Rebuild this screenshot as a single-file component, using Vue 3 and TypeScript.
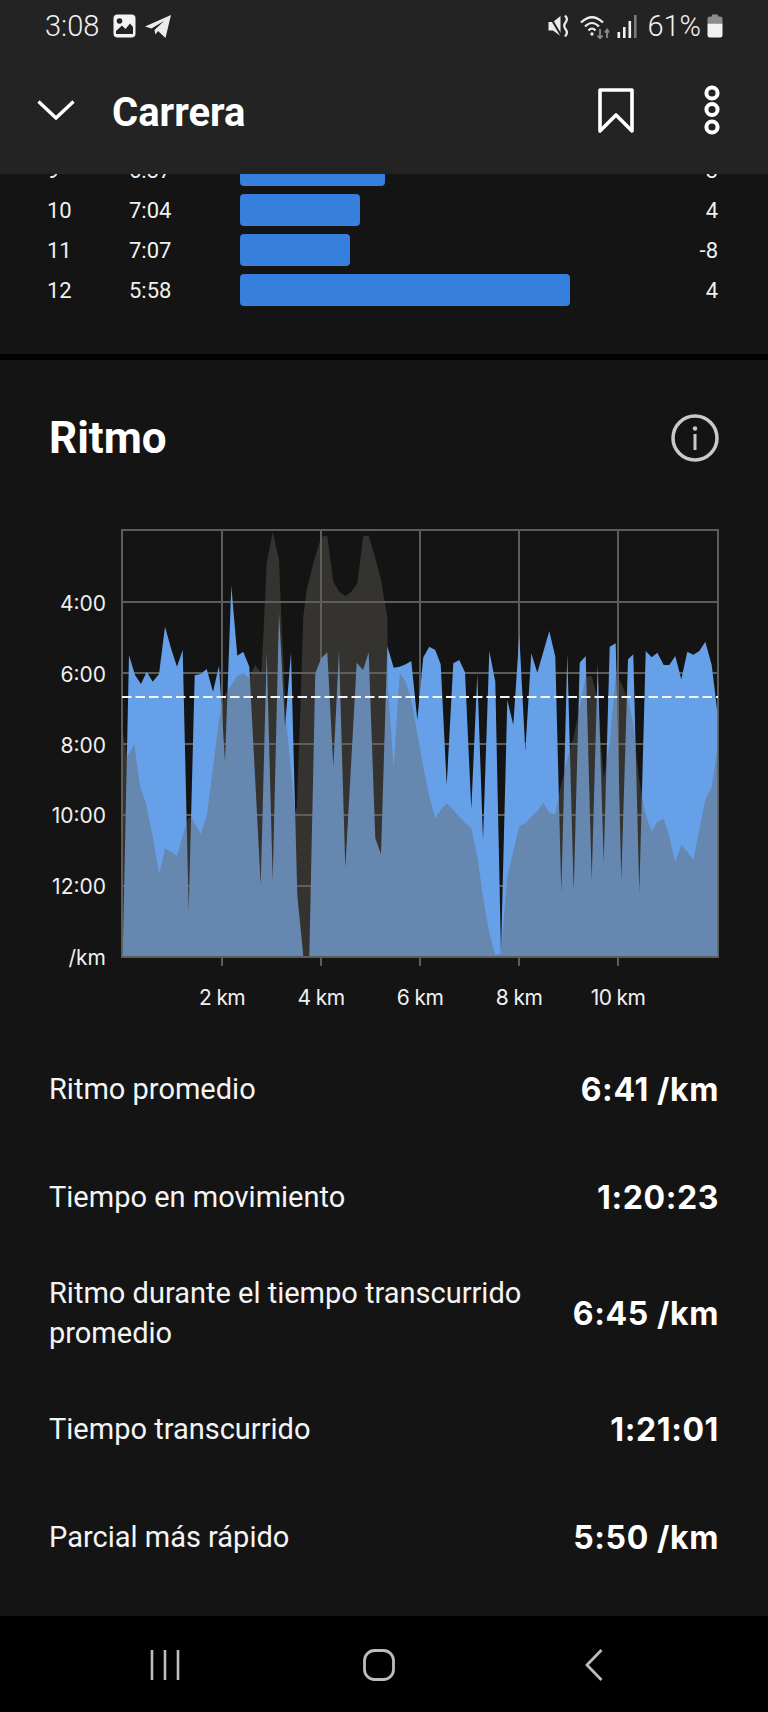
<script setup lang="ts">
type Pt = [number, number];

// traced from the chart, coordinates are 3x crops with their own x offset
const toPage = (pts: Pt[], offX: number) =>
  pts.map(([x, y]) => `${(offX + x / 3).toFixed(1)},${(520 + y / 3).toFixed(1)}`).join(" ");

const paceA: Pt[] = [[68,1308],[87,405],[105,465],[123,492],[140,455],[158,485],[177,462],[195,320],[213,385],[231,440],[248,390],[266,1170],[284,466],[302,462],[320,447],[339,515],[357,437],[375,725],[394,197],[412,407],[430,395],[448,440],[482,1095],[500,395],[518,1080],[537,278],[555,620],[573,397],[592,1125],[610,1308],[628,1308],[646,460],[664,415],[682,397],[700,740],[717,390],[736,1045],[770,428],[789,450],[806,397],[826,955],[843,1003],[862,378],[881,443],[899,440],[917,433],[934,423],[952,600],[970,412],[988,380],[1006,390]];
const paceB: Pt[] = [[62,433],[80,795],[100,430],[118,420],[135,457],[154,868],[172,462],[189,960],[208,393],[226,485],[243,1300],[262,540],[280,615],[298,345],[316,692],[334,400],[352,458],[388,333],[406,410],[424,1118],[442,400],[461,1115],[479,428],[497,408],[515,1080],[533,432],[551,1025],[569,380],[587,370],[604,1080],[624,418],[640,403],[658,1118],[677,393],[695,412],[712,398],[731,435],[748,435],[766,408],[784,478],[802,395],[820,404],[838,393],[856,365],[875,435],[892,575],[892,1308]];
const elevA: Pt[] = [[65,1308],[65,620],[82,710],[103,672],[120,800],[138,850],[158,950],[178,1062],[195,985],[213,995],[231,1007],[250,940],[266,890],[275,895],[302,942],[320,890],[339,745],[357,600],[375,525],[394,495],[412,468],[430,460],[448,475],[466,435],[484,460],[490,350],[500,130],[518,35],[537,120],[543,270],[558,600],[585,875],[590,865],[600,600],[610,290],[620,210],[640,130],[664,50],[682,47],[700,185],[718,215],[736,228],[754,215],[772,190],[790,47],[806,47],[825,110],[843,180],[862,290],[864,500],[881,745],[899,460],[917,485],[934,540],[952,640],[970,740],[988,830],[1006,895]];
const elevB: Pt[] = [[62,870],[80,850],[100,870],[118,890],[135,908],[154,925],[172,1010],[189,1130],[208,1240],[226,1305],[243,1300],[262,1070],[298,918],[316,910],[334,890],[352,873],[370,848],[388,880],[406,882],[424,790],[442,720],[461,650],[479,560],[497,470],[515,468],[533,540],[551,775],[569,670],[587,465],[604,490],[624,540],[640,610],[658,780],[670,850],[677,885],[695,935],[712,905],[731,897],[748,950],[766,1025],[784,975],[802,995],[820,1020],[838,930],[856,840],[875,800],[892,690],[892,1308]];

const pacePoints = `${toPage(paceA, 100)} ${toPage(paceB, 420)}`;
const elevPoints = `${toPage(elevA, 100)} ${toPage(elevB, 420)}`;

const splits = [
  { km: "9", pace: "6:37", width: 145, elev: "3" },
  { km: "10", pace: "7:04", width: 120, elev: "4" },
  { km: "11", pace: "7:07", width: 110, elev: "-8" },
  { km: "12", pace: "5:58", width: 330, elev: "4" },
];

const gridX = [222, 321, 420, 519, 618];
const gridY = [602, 673, 744, 815, 886];
const yLabels = ["4:00", "6:00", "8:00", "10:00", "12:00", "/km"];
const xLabels = ["2 km", "4 km", "6 km", "8 km", "10 km"];

const stats = [
  { label: "Ritmo promedio", value: "6:41 /km" },
  { label: "Tiempo en movimiento", value: "1:20:23" },
  { label: "Ritmo durante el tiempo transcurrido promedio", value: "6:45 /km" },
  { label: "Tiempo transcurrido", value: "1:21:01" },
  { label: "Parcial más rápido", value: "5:50 /km" },
];
</script>

<template>
  <div class="phone">
    <header class="appbar">
      <div class="status">
        <span class="clock">3:08</span>
        <svg class="st-image" width="23" height="24" viewBox="0 0 23 24">
          <rect x="0.5" y="0.5" width="22" height="23" rx="4" fill="#f4f4f4" />
          <circle cx="6.5" cy="7" r="2.8" fill="#232323" />
          <path d="M3 20 V17 L9 11.5 L12.5 15 L17 9.5 L20 13 V20 Z" fill="#232323" />
        </svg>
        <svg class="st-plane" width="26" height="23" viewBox="0 0 26 23">
          <path d="M0 11.5 L26 0 L20.5 23 L13 16 L10.5 19.5 L9.5 15 L19 6 L6.5 13.5 Z" fill="#ececec" />
        </svg>
        <span class="st-spacer"></span>
        <svg width="22" height="24" viewBox="0 0 22 24" fill="none">
          <path d="M0.5 8 H5 L12.5 2 V22 L5 16.5 H0.5 Z" fill="#ececec" />
          <path d="M1 1 L14 23" stroke="#232323" stroke-width="2" />
          <path d="M17 1.5 Q20.5 5 17.5 8.5 Q15 12 17.5 15 Q20.5 19 17 22.5" stroke="#ececec" stroke-width="2.2" />
        </svg>
        <svg class="st-wifi" width="32" height="25" viewBox="0 0 32 25" fill="none">
          <path d="M1 8.5 Q12 -2 23 8.5" stroke="#ececec" stroke-width="2.2" />
          <path d="M5 12.5 Q12 5.5 19 12.5" stroke="#ececec" stroke-width="2.2" />
          <path d="M8.5 16.5 Q12 12.5 15.5 16.5" stroke="#ececec" stroke-width="2.2" />
          <circle cx="12" cy="20" r="1.7" fill="#ececec" />
          <path d="M20 15 V24 M17.5 21.5 L20 24.5 L22.5 21.5" stroke="#8a8a8a" stroke-width="1.8" />
          <path d="M27 24 V16 M25 18.5 L27 15.5 L29 18.5" stroke="#8a8a8a" stroke-width="1.8" />
        </svg>
        <svg class="st-signal" width="20" height="23" viewBox="0 0 20 23">
          <rect x="0.5" y="17" width="2.6" height="6" fill="#f2f2f2" />
          <rect x="6" y="12" width="2.6" height="11" fill="#f2f2f2" />
          <rect x="11.5" y="6" width="2.6" height="17" fill="#f2f2f2" />
          <rect x="17" y="0" width="2.6" height="23" fill="#7c7c7c" />
        </svg>
        <span class="battery-text">61%</span>
        <svg width="16" height="24" viewBox="0 0 16 24">
          <path d="M5 0.5 H11 V2.5 H13 Q15.5 2.5 15.5 5 V9.5 H0.5 V5 Q0.5 2.5 3 2.5 H5 Z" fill="#8c8c8c" />
          <path d="M0.5 9.5 H15.5 V21 Q15.5 23.5 13 23.5 H3 Q0.5 23.5 0.5 21 Z" fill="#f2f2f2" />
        </svg>
      </div>
      <div class="titlebar">
        <svg class="chev" width="38" height="20" viewBox="0 0 38 20" fill="none">
          <path d="M1.5 1.5 L19 18 L36.5 1.5" stroke="#fff" stroke-width="3.4" />
        </svg>
        <h1 class="title">Carrera</h1>
        <svg class="bookmark" width="36" height="45" viewBox="0 0 36 45" fill="none">
          <path d="M2 2 H34 V43 L18 27 L2 43 Z" stroke="#fff" stroke-width="3.6" stroke-linejoin="round" />
        </svg>
        <svg class="more" width="16" height="50" viewBox="0 0 16 50" fill="none">
          <circle cx="8" cy="8" r="5.6" stroke="#fff" stroke-width="4" />
          <circle cx="8" cy="24.5" r="5.6" stroke="#fff" stroke-width="4" />
          <circle cx="8" cy="42" r="5.6" stroke="#fff" stroke-width="4" />
        </svg>
      </div>
    </header>

    <main class="scroller">
      <section class="splits">
        <div v-for="s in splits" :key="s.km" class="split-row">
          <span class="split-km">{{ s.km }}</span>
          <span class="split-pace">{{ s.pace }}</span>
          <div class="split-track">
            <div class="split-bar" :style="{ width: s.width + 'px' }"></div>
          </div>
          <span class="split-elev">{{ s.elev }}</span>
        </div>
      </section>

      <section class="pace">
        <div class="pace-head">
          <h2 class="pace-title">Ritmo</h2>
          <svg width="48" height="48" viewBox="0 0 48 48" fill="none">
            <circle cx="24" cy="24" r="22" stroke="#c9c9c5" stroke-width="3.5" />
            <circle cx="24" cy="14.5" r="2.2" fill="#c9c9c5" />
            <rect x="22.5" y="20" width="3" height="16" fill="#c9c9c5" />
          </svg>
        </div>

        <div class="chart">
          <div class="y-labels">
            <span v-for="l in yLabels" :key="l">{{ l }}</span>
          </div>
          <svg class="plot" width="600" height="440" viewBox="120 528 600 440" fill="none">
            <g stroke="#5c5c5a" stroke-width="2">
              <path v-for="x in gridX" :key="x" :d="`M${x} 530 V966`" />
              <path v-for="y in gridY" :key="y" :d="`M122 ${y} H718`" />
              <path d="M122 530 H718 V957 H122 Z" />
            </g>
            <polygon :points="pacePoints" fill="#66a0e8" />
            <polygon :points="elevPoints" fill="#686258" fill-opacity="0.395" />
            <path d="M122 697 H718" stroke="#f4f4f4" stroke-width="2" stroke-dasharray="9.5 4" />
          </svg>
          <div class="x-labels">
            <span v-for="(l, i) in xLabels" :key="l" class="x-label" :style="{ left: gridX[i] - 122 + 'px' }">{{ l }}</span>
          </div>
        </div>

        <div class="stats">
          <div v-for="s in stats" :key="s.label" class="stat">
            <span class="stat-label">{{ s.label }}</span>
            <span class="stat-value">{{ s.value }}</span>
          </div>
        </div>
      </section>
    </main>

    <nav class="navbar">
      <svg width="30" height="32" viewBox="0 0 30 32" fill="none">
        <path d="M2 1 V31 M15 1 V31 M28 1 V31" stroke="#bdbdbd" stroke-width="2.6" />
      </svg>
      <svg width="32" height="32" viewBox="0 0 32 32" fill="none">
        <rect x="1.5" y="1.5" width="29" height="29" rx="10" stroke="#bdbdbd" stroke-width="2.8" />
      </svg>
      <svg width="18" height="32" viewBox="0 0 18 32" fill="none">
        <path d="M16.5 1 L2 16 L16.5 31" stroke="#bdbdbd" stroke-width="2.8" />
      </svg>
    </nav>
  </div>
</template>

<style scoped>
.phone {
  width: 768px;
  height: 1712px;
  display: flex;
  flex-direction: column;
  overflow: hidden;
  background: #141414;
  color: #fff;
  font-family: Roboto, "Liberation Sans", sans-serif;
}
.appbar {
  height: 174px;
  flex: none;
  background: #232323;
  position: relative;
  z-index: 1;
}
.status {
  height: 52px;
  padding: 0 45px 0 45px;
  display: flex;
  align-items: center;
  color: #f2f2f2;
}
.clock {
  font-size: 29px;
  font-weight: 300;
  margin-right: 14px;
}
.st-image {
  margin-right: 9px;
}
.st-spacer {
  flex: 1;
}
.st-wifi {
  margin-left: 10px;
}
.st-signal {
  margin-left: 5px;
}
.battery-text {
  font-size: 29px;
  font-weight: 300;
  margin: 0 6px 0 10px;
}
.titlebar {
  height: 122px;
  box-sizing: border-box;
  padding: 0 48px 6px 37px;
  display: flex;
  align-items: center;
}
.chev {
  flex: none;
}
.title {
  flex: 1;
  margin: 5px 0 0 37px;
  font-size: 40px;
  font-weight: 700;
}
.bookmark {
  margin-right: 70px;
}
.scroller {
  flex: 1;
  overflow: hidden;
  min-height: 0;
}
.splits {
  margin-top: -20px;
  height: 200px;
  border-bottom: 6px solid #000;
}
.split-row {
  height: 32px;
  margin-bottom: 8px;
  padding: 0 50px 0 47px;
  display: flex;
  align-items: center;
  font-size: 22px;
  color: #f0f0f0;
}
.split-km {
  width: 82px;
}
.split-pace {
  width: 111px;
}
.split-track {
  flex: 1;
}
.split-bar {
  height: 32px;
  border-radius: 4px;
  background: #367fdc;
}
.pace {
  padding: 0 49px;
}
.pace-head {
  height: 156px;
  display: flex;
  justify-content: space-between;
  align-items: center;
}
.pace-title {
  margin: 0;
  font-size: 44px;
  font-weight: 700;
}
.chart {
  position: relative;
  height: 519px;
  margin: 0 -49px;
}
.plot {
  position: absolute;
  left: 120px;
  top: 12px;
}
.y-labels span {
  position: absolute;
  right: 662px;
  font-family: Inter, Roboto, sans-serif;
  font-size: 21px;
  color: #f0f0f0;
  transform: translateY(-50%);
}
.y-labels span:nth-child(1) { top: 87px; }
.y-labels span:nth-child(2) { top: 158px; }
.y-labels span:nth-child(3) { top: 229px; }
.y-labels span:nth-child(4) { top: 299px; }
.y-labels span:nth-child(5) { top: 370px; }
.y-labels span:nth-child(6) { top: 441px; }
.x-labels {
  position: absolute;
  left: 122px;
  top: 481px;
}
.x-label {
  position: absolute;
  font-family: Inter, Roboto, sans-serif;
  font-size: 21px;
  letter-spacing: -0.6px;
  color: #f0f0f0;
  white-space: nowrap;
  transform: translate(-50%, -50%);
}
.stat {
  min-height: 108px;
  padding: 22px 0;
  box-sizing: border-box;
  display: flex;
  justify-content: space-between;
  align-items: center;
  gap: 40px;
}
.stat-label {
  font-size: 29px;
  line-height: 40px;
  max-width: 490px;
  color: #f4f4f4;
}
.stat-value {
  flex: none;
  font-family: Inter, Roboto, sans-serif;
  font-size: 32px;
  font-weight: 700;
  letter-spacing: 0.6px;
  white-space: nowrap;
}
.navbar {
  height: 96px;
  flex: none;
  background: #000;
  display: flex;
  align-items: flex-start;
  padding-top: 33px;
  box-sizing: border-box;
}
.navbar svg:nth-child(1) { margin-left: 150px; }
.navbar svg:nth-child(2) { margin-left: 183px; }
.navbar svg:nth-child(3) { margin-left: 190px; }
</style>

<style>
body {
  background: #000;
}
</style>
